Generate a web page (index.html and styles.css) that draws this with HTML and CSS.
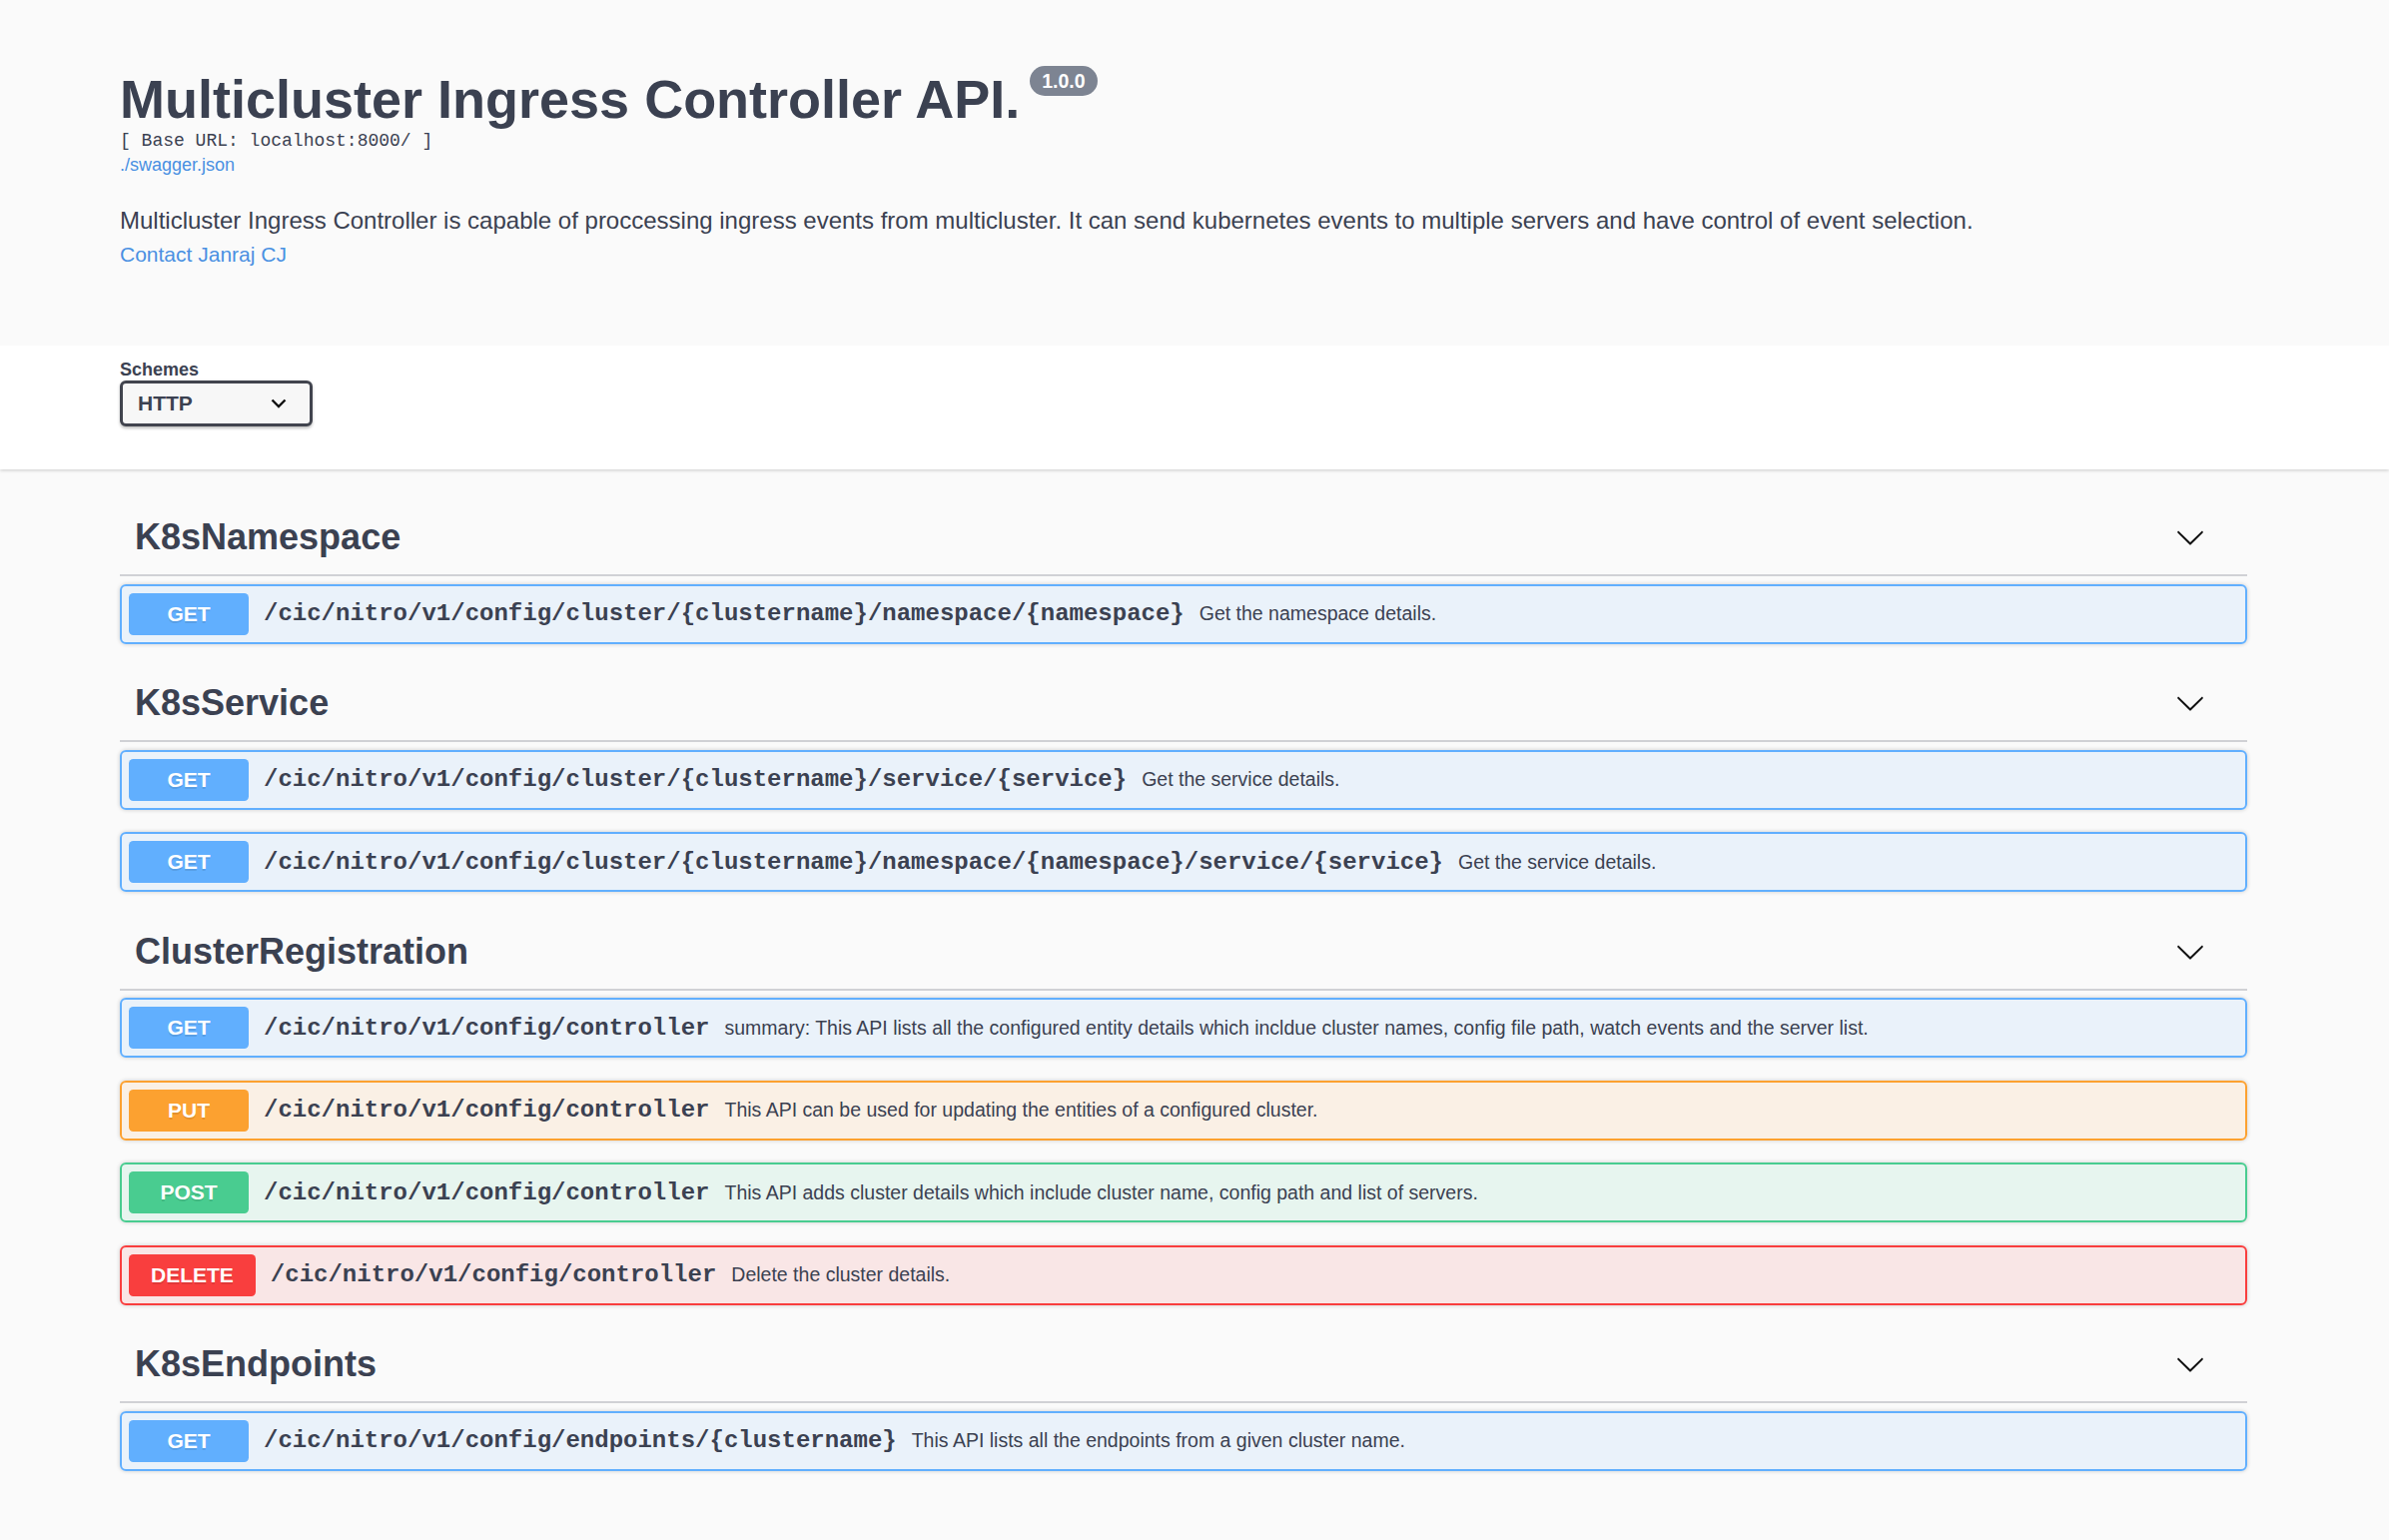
FILE: index.html
```html
<!DOCTYPE html>
<html lang="en">
<head>
<meta charset="utf-8">
<title>Multicluster Ingress Controller API</title>
<link rel="stylesheet" href="styles.css">
</head>
<body>
<div class="swagger">
  <section class="wrapper info">
    <h1 class="title">Multicluster Ingress Controller API.<span class="version">1.0.0</span></h1>
    <pre class="base-url">[ Base URL: localhost:8000/ ]</pre>
    <a class="spec-link" href="#">./swagger.json</a>
    <p class="description">Multicluster Ingress Controller is capable of proccessing ingress events from multicluster. It can send kubernetes events to multiple servers and have control of event selection.</p>
    <a class="contact" href="#">Contact Janraj CJ</a>
  </section>

  <div class="scheme-container">
    <div class="wrapper">
      <label class="schemes-title">Schemes</label>
      <div class="select">
        <span>HTTP</span>
        <svg class="select-arrow" width="16" height="10" viewBox="0 0 16 10"><path d="M1.5 1.5 L8 8 L14.5 1.5" fill="none" stroke="#111" stroke-width="2.4"/></svg>
      </div>
    </div>
  </div>

  <div class="wrapper operations">
    <section class="tag-section">
      <h3 class="tag"><span class="tag-name">K8sNamespace</span>
        <svg class="tag-arrow" width="30" height="30" viewBox="0 0 20 20"><path d="M17.418 6.109c.272-.268.709-.268.979 0s.271.701 0 .969l-7.908 7.83c-.27.268-.707.268-.979 0l-7.908-7.830c-.27-.268-.27-.701 0-.969.271-.268.709-.268.979 0L10 13.25l7.418-7.141z"/></svg>
      </h3>
      <div class="opblock get">
        <span class="method">GET</span>
        <span class="path">/cic/nitro/v1/config/cluster/{clustername}/namespace/{namespace}</span>
        <span class="summary">Get the namespace details.</span>
      </div>
    </section>

    <section class="tag-section">
      <h3 class="tag"><span class="tag-name">K8sService</span>
        <svg class="tag-arrow" width="30" height="30" viewBox="0 0 20 20"><path d="M17.418 6.109c.272-.268.709-.268.979 0s.271.701 0 .969l-7.908 7.83c-.27.268-.707.268-.979 0l-7.908-7.83c-.27-.268-.27-.701 0-.969.271-.268.709-.268.979 0L10 13.25l7.418-7.141z"/></svg>
      </h3>
      <div class="opblock get">
        <span class="method">GET</span>
        <span class="path">/cic/nitro/v1/config/cluster/{clustername}/service/{service}</span>
        <span class="summary">Get the service details.</span>
      </div>
      <div class="opblock get">
        <span class="method">GET</span>
        <span class="path">/cic/nitro/v1/config/cluster/{clustername}/namespace/{namespace}/service/{service}</span>
        <span class="summary">Get the service details.</span>
      </div>
    </section>

    <section class="tag-section">
      <h3 class="tag"><span class="tag-name">ClusterRegistration</span>
        <svg class="tag-arrow" width="30" height="30" viewBox="0 0 20 20"><path d="M17.418 6.109c.272-.268.709-.268.979 0s.271.701 0 .969l-7.908 7.83c-.27.268-.707.268-.979 0l-7.908-7.83c-.27-.268-.27-.701 0-.969.271-.268.709-.268.979 0L10 13.25l7.418-7.141z"/></svg>
      </h3>
      <div class="opblock get">
        <span class="method">GET</span>
        <span class="path">/cic/nitro/v1/config/controller</span>
        <span class="summary">summary: This API lists all the configured entity details which incldue cluster names, config file path, watch events and the server list.</span>
      </div>
      <div class="opblock put">
        <span class="method">PUT</span>
        <span class="path">/cic/nitro/v1/config/controller</span>
        <span class="summary">This API can be used for updating the entities of a configured cluster.</span>
      </div>
      <div class="opblock post">
        <span class="method">POST</span>
        <span class="path">/cic/nitro/v1/config/controller</span>
        <span class="summary">This API adds cluster details which include cluster name, config path and list of servers.</span>
      </div>
      <div class="opblock delete">
        <span class="method">DELETE</span>
        <span class="path">/cic/nitro/v1/config/controller</span>
        <span class="summary">Delete the cluster details.</span>
      </div>
    </section>

    <section class="tag-section">
      <h3 class="tag"><span class="tag-name">K8sEndpoints</span>
        <svg class="tag-arrow" width="30" height="30" viewBox="0 0 20 20"><path d="M17.418 6.109c.272-.268.709-.268.979 0s.271.701 0 .969l-7.908 7.83c-.27.268-.707.268-.979 0l-7.908-7.83c-.27-.268-.27-.701 0-.969.271-.268.709-.268.979 0L10 13.25l7.418-7.141z"/></svg>
      </h3>
      <div class="opblock get">
        <span class="method">GET</span>
        <span class="path">/cic/nitro/v1/config/endpoints/{clustername}</span>
        <span class="summary">This API lists all the endpoints from a given cluster name.</span>
      </div>
    </section>
  </div>
</div>
</body>
</html>
```

FILE: styles.css
```css
html, body {
  margin: 0;
  padding: 0;
  background: #fafafa;
}

body {
  font-family: "Liberation Sans", Arial, sans-serif;
  color: #3b4151;
}

.wrapper {
  box-sizing: border-box;
  width: 2130px;
  margin: 0 142px 0 120px;
}

/* ---------- info ---------- */
.info {
  padding: 68px 0 76px;
  display: flex;
  flex-direction: column;
  align-items: flex-start;
}

.title {
  margin: 0;
  font-size: 54px;
  line-height: 62px;
  font-weight: 700;
  color: #3b4151;
}

.version {
  display: inline-block;
  vertical-align: top;
  margin: -2px 0 0 10px;
  padding: 3px 12px;
  border-radius: 86px;
  background: #7d8492;
  color: #fff;
  font-size: 19.5px;
  line-height: 24px;
  font-weight: 700;
}

.base-url {
  margin: 0 0 2px;
  font-family: "Liberation Mono", "Courier New", monospace;
  font-size: 18px;
  line-height: 22px;
  font-weight: 400;
  color: #3b4151;
}

.spec-link {
  font-size: 18px;
  line-height: 22px;
  color: #4990e2;
  text-decoration: none;
}

.description {
  margin: 30px 0 4px;
  font-size: 24px;
  line-height: 30px;
  color: #3b4151;
}

.contact {
  font-size: 21px;
  line-height: 30px;
  color: #4990e2;
  text-decoration: none;
}

/* ---------- schemes ---------- */
.scheme-container {
  background: #fff;
  padding: 13px 0 43px;
  margin: 0 0 31px;
  box-shadow: 0 1.5px 3px 0 rgba(0, 0, 0, 0.15);
}

.schemes-title {
  display: block;
  font-size: 18px;
  line-height: 22px;
  font-weight: 700;
  color: #3b4151;
}

.select {
  box-sizing: border-box;
  display: flex;
  align-items: center;
  justify-content: space-between;
  width: 193px;
  height: 46px;
  padding: 0 23px 0 15px;
  border: 3px solid #41444e;
  border-radius: 6px;
  background: #f7f7f7;
  box-shadow: 0 1.5px 3px 0 rgba(0, 0, 0, 0.25);
  font-size: 21px;
  font-weight: 700;
  color: #3b4151;
}

.select-arrow {
  display: block;
}

/* ---------- operations ---------- */
.tag-section {
  display: flex;
  flex-direction: column;
}

.tag {
  display: flex;
  align-items: center;
  margin: 0 0 7.5px;
  padding: 15px 30px 15px 15px;
  height: 44px;
  box-sizing: content-box;
  border-bottom: 2px solid rgba(59, 65, 81, 0.22);
  font-size: 36px;
  line-height: 44px;
  font-weight: 700;
  color: #3b4151;
}

.tag-name {
  flex: 1;
}

.tag-arrow {
  display: block;
  margin-right: 12px;
  fill: #111;
}

.opblock {
  display: flex;
  align-items: center;
  margin: 0 0 22.5px;
  padding: 7px;
  border: 2px solid #000;
  border-radius: 6px;
  box-shadow: 0 0 4.5px rgba(0, 0, 0, 0.19);
}

.method {
  box-sizing: border-box;
  min-width: 120px;
  padding: 9px 22px;
  border-radius: 4.5px;
  font-size: 21px;
  line-height: 24px;
  font-weight: 700;
  text-align: center;
  color: #fff;
  text-shadow: 0 1.5px 0 rgba(0, 0, 0, 0.1);
}

.path {
  padding: 0 15px;
  font-family: "Liberation Mono", "Courier New", monospace;
  font-size: 24px;
  font-weight: 700;
  color: #3b4151;
  white-space: nowrap;
}

.summary {
  flex: 1;
  font-size: 19.5px;
  color: #3b4151;
}

.opblock.get {
  border-color: #61affe;
  background: rgba(97, 175, 254, 0.1);
}
.opblock.get .method { background: #61affe; }

.opblock.put {
  border-color: #fca130;
  background: rgba(252, 161, 48, 0.1);
}
.opblock.put .method { background: #fca130; }

.opblock.post {
  border-color: #49cc90;
  background: rgba(73, 204, 144, 0.1);
}
.opblock.post .method { background: #49cc90; }

.opblock.delete {
  border-color: #f93e3e;
  background: rgba(249, 62, 62, 0.1);
}
.opblock.delete .method { background: #f93e3e; }
```
